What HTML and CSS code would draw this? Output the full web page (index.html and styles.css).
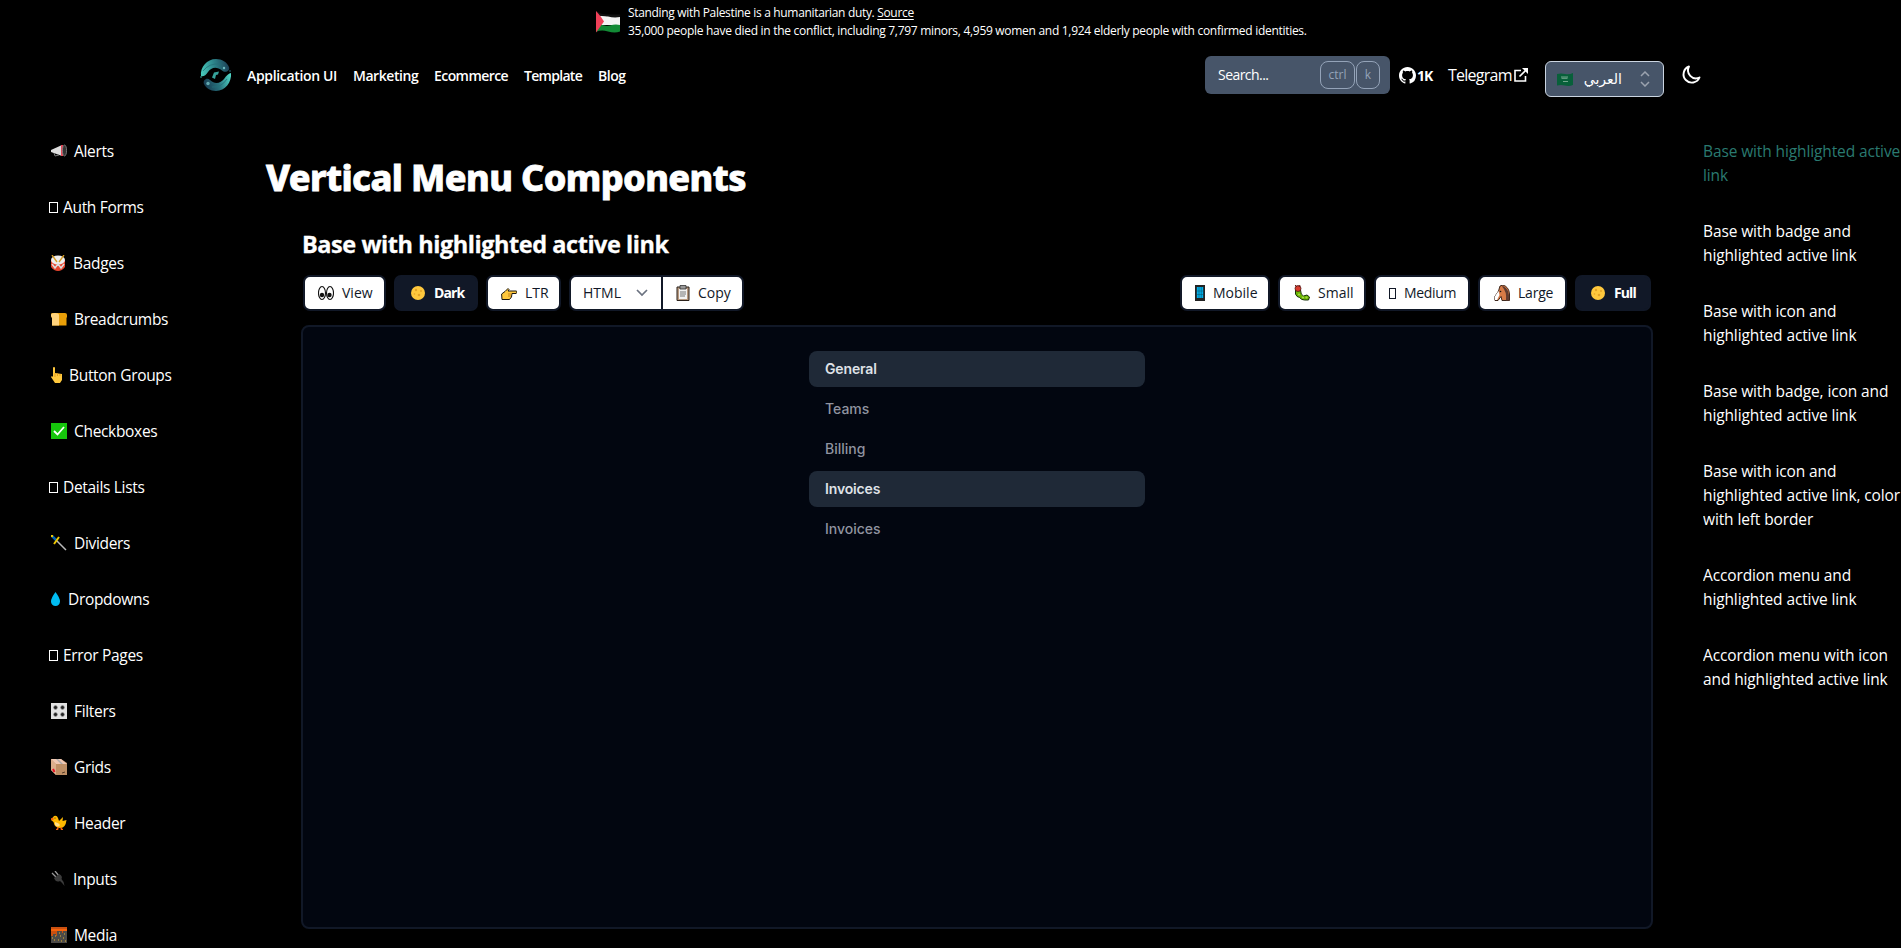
FILE: index.html
```
<!DOCTYPE html>
<html lang="en">
<head>
<meta charset="utf-8">
<title>Vertical Menu Components</title>
<link rel="stylesheet" href="styles.css">
</head>
<body>
<div class="banner">
  <svg class="banner-flag" viewBox="0 0 24 22"><path d="M0 2.500Q6 6 12 5T24 5.500V14H0z" fill="#f4f4f4"/><path d="M0 0Q5 3.500 11 3.500T24 3.500V6Q18 7 12 5.500T0 6z" fill="#111"/><path d="M3 12.500Q9 16 14 14.500T24 14V20.500Q19 22.500 12 20.500T0 21z" fill="#128a35"/><path d="M0 0Q4 4 8 10.500Q4 16 0 21.500z" fill="#ee4058"/></svg>
  <div class="banner-text">
    <p>Standing with Palestine is a humanitarian duty. <a class="source">Source</a></p>
    <p>35,000 people have died in the conflict, including 7,797 minors, 4,959 women and 1,924 elderly people with confirmed identities.</p>
  </div>
</div>

<header class="topbar">
  <svg class="logo" viewBox="0 0 32 32">
    <defs>
      <linearGradient id="swirlTop" x1="0" y1=".6" x2="1" y2=".5"><stop offset="0" stop-color="#47c8ba"/><stop offset=".5" stop-color="#2c8289"/><stop offset="1" stop-color="#1c4056"/></linearGradient>
      <linearGradient id="swirlLow" x1="0" y1=".5" x2="1" y2=".3"><stop offset="0" stop-color="#173c52"/><stop offset=".5" stop-color="#28727d"/><stop offset="1" stop-color="#4fd4c5"/></linearGradient>
    </defs>
    <path d="M1 17C0 8 7 0 16 0c6 0 11 3 13 8 1.500 4-4 6.500-7 3.500C17 7 11 8 8 13c-2 3.500-5 5-7 4z" fill="url(#swirlTop)"/>
    <path d="M31 14c1 9-6 18-15 18-6 0-10-3-12-7-1.500-4 3-7 6-4 5 5 11 3 14-1 2.500-3.500 5-6 7-6z" fill="url(#swirlLow)"/>
    <path d="M3 12Q9 4 20 5" fill="none" stroke="#247079" stroke-width=".8"/><path d="M12 28q9 1 15-8" fill="none" stroke="#237078" stroke-width=".8"/>
    <path d="M14 13.500l5-1-1 3-2 .500-1 4-3-1.500z" fill="#36a39b"/><circle cx="24" cy="9" r="1.200" fill="#6dbac0"/><circle cx="8" cy="24.500" r="1.700" fill="#63a8b0"/><circle cx="1" cy="18" r=".8" fill="#43b7ac"/><circle cx="30" cy="12" r=".8" fill="#2b7280"/>
  </svg>
  <nav class="nav"><a class="w90">Application UI</a><a class="w65">Marketing</a><a class="w74">Ecommerce</a><a class="w58">Template</a><a>Blog</a></nav>
  <div class="search"><span class="search-label">Search...</span><kbd class="ctrl">ctrl</kbd><kbd class="key">k</kbd></div>
  <a class="github"><svg width="17" height="17" viewBox="0 0 16 16"><path fill="#fff" d="M8 0C3.580 0 0 3.580 0 8c0 3.540 2.290 6.530 5.470 7.590.4.070.55-.17.55-.38 0-.19-.010-.82-.010-1.490-2.010.37-2.530-.49-2.690-.94-.09-.23-.48-.94-.82-1.130-.28-.15-.68-.52-.010-.53.63-.010 1.080.58 1.230.82.72 1.210 1.870.87 2.330.66.070-.52.28-.87.51-1.070-1.780-.2-3.640-.89-3.640-3.950 0-.87.31-1.590.82-2.150-.08-.2-.36-1.020.08-2.120 0 0 .67-.21 2.200.82.64-.18 1.320-.27 2-.27s1.360.09 2 .27c1.530-1.040 2.200-.82 2.200-.82.44 1.100.16 1.920.08 2.120.51.56.82 1.270.82 2.150 0 3.070-1.870 3.750-3.650 3.950.29.25.54.73.54 1.480 0 1.070-.010 1.930-.010 2.200 0 .21.15.46.55.38A8.010 8.010 0 0 0 16 8c0-4.420-3.580-8-8-8z"/></svg><span>1K</span></a>
  <a class="telegram"><span>Telegram</span><svg width="14" height="14" viewBox="0 0 14 14" fill="none" stroke="#fff" stroke-width="1.600"><path d="M7 2.500H1V13H11.500V8M5.500 8.500L12 2"/><path d="M8 0h6v6z" fill="#fff" stroke="none"/></svg></a>
  <div class="lang"><svg width="16" height="13" viewBox="0 0 16 13"><path d="M0 1q4-1 8 0t8-1v12q-4 1.500-8 .5T0 12.500z" fill="#08603a"/><path d="M4 4h7M4.500 5.300h6M6 8.500h5" stroke="#8eb9a2" stroke-width=".8"/></svg><span class="lang-name" dir="rtl">العربي</span><svg width="10" height="16" viewBox="0 0 10 16" fill="none" stroke="#9ca3af" stroke-width="1.500"><path d="M1 5l4-4 4 4M1 11l4 4 4-4"/></svg></div>
  <svg class="moon" width="20" height="20" viewBox="0 0 20 20" fill="none" stroke="#fff" stroke-width="1.900" stroke-linejoin="round"><path d="M8 1.500A8.300 8.300 0 1 0 18.500 12.500 8 8 0 0 1 8 1.500z"/></svg>
</header>

<div class="columns">
  <aside class="sidebar">
    <a class="i23"><svg viewBox="0 0 16 16"><path d="M0 7l11-5v11L0 9z" fill="#ddd"/><path d="M10 2h2v11h-2z" fill="#e54858"/><ellipse cx="13.500" cy="7.500" rx="2.100" ry="5.500" fill="#333" stroke="#888" stroke-width=".8"/><path d="M3 10l1 3 4-1" stroke="#777" fill="none"/></svg>Alerts</a>
    <a class="box"><i class="tofu"></i>Auth Forms</a>
    <a class="i22"><svg viewBox="0 0 16 16"><path d="M0 5h14v7q-3 4-7 4t-7-4z" fill="#e8452e"/><ellipse cx="7" cy="5" rx="7" ry="4.500" fill="#eee"/><path d="M1 9l3 4 3-4 3 4 3-4" stroke="#ddd" fill="none" stroke-width="1.500"/><path d="M1 0l5 7M13 0L8 7" stroke="#d59b22" stroke-width="1.300"/></svg>Badges</a>
    <a class="i24"><svg viewBox="0 0 16 16"><path d="M0 3q0-1 2-1h12q2 0 2 2v2l-.5 1v7.500H1V7L0 5z" fill="#e99f08"/><path d="M0 4q0-2 4-2t4 2v10.500H1V7L0 5z" fill="#ffd37c"/></svg>Breadcrumbs</a>
    <a class="i19"><svg viewBox="0 0 16 16"><path d="M2 1q0-1 1-1t1 1v5l7 1v6l-2 3H4L0 10l1-1 1 1z" fill="#ffc83d"/><path d="M4 6v4M6.500 6v3M9 7v2" stroke="#d68d16" stroke-width=".7"/></svg>Button Groups</a>
    <a class="i23"><svg viewBox="0 0 16 16"><path d="M0 0h16v16H0z" fill="#16c60c"/><path d="M3 8l3.500 3.500L13 4" stroke="#fff" stroke-width="1.800" fill="none"/></svg>Checkboxes</a>
    <a class="box"><i class="tofu"></i>Details Lists</a>
    <a class="i24"><svg viewBox="0 0 16 16"><path d="M5 5l10 10" stroke="#bbb" stroke-width="1.500"/><path d="M0 0l6 6" stroke="#0063b1" stroke-width="2.500"/><path d="M8 2L3 9" stroke="#f0c800" stroke-width="2"/><circle cx="1" cy="1" r="1.200" fill="#f0c800"/></svg>Dividers</a>
    <a class="i18"><svg viewBox="0 0 16 16"><path d="M4.500 1Q9 7 9 10.500a4.500 4.500 0 0 1-9 0Q0 7 4.500 1z" fill="#00bcf2"/></svg>Dropdowns</a>
    <a class="box"><i class="tofu"></i>Error Pages</a>
    <a class="i24"><svg viewBox="0 0 16 16"><path d="M0 0h16v16H0z" fill="#e2e2e2"/><g fill="#222" stroke="#999" stroke-width=".6"><circle cx="4.500" cy="4.500" r="1.900"/><circle cx="11.500" cy="4.500" r="1.900"/><circle cx="4.500" cy="11.500" r="1.900"/><circle cx="11.500" cy="11.500" r="1.900"/></g></svg>Filters</a>
    <a class="i23"><svg viewBox="0 0 16 16"><path d="M0 0h10l6 4v12H5L0 11z" fill="#be8f65"/><path d="M0 0l5 5v11L0 11z" fill="#dbae8c"/><path d="M0 0h10l6 5H5z" fill="#efc7b2"/><path d="M5 0h2l5 5h-2z" fill="#aaa"/><path d="M2 10l1.500 3" stroke="#e81224" stroke-width="2"/><path d="M11 14l3-1" stroke="#553b27"/></svg>Grids</a>
    <a class="i24"><svg viewBox="0 0 16 16"><path d="M3 1q3-1 4 2l1 3 4-4-.500 4 4-1q-1 8-6 8-6 0-7-6L0 5z" fill="#ffb900"/><path d="M4 7q4 1 5 3-2 3-5 0z" fill="#ffe08a"/><path d="M0 4l2-1v2zM7 12v2.500H5M10 12v2.500h2" fill="#f7630c" stroke="#f7630c"/><circle cx="4" cy="3" r=".6" fill="#222"/></svg>Header</a>
    <a class="i22"><svg viewBox="0 0 16 16"><path d="M1 2l4 4M4 0l4 5" stroke="#999" stroke-width="1.300"/><path d="M3 7l5-4q4 2 2.500 5 3 3 3 7-2-3-4.500-5-4 2-6-3z" fill="#3b3b3b"/></svg>Inputs</a>
    <a class="i24"><svg viewBox="0 0 16 16"><path d="M0 0h16v16H0z" fill="#ca5010"/><path d="M0 3h16" stroke="#f7630c" stroke-width="2"/><path d="M0 9h2V7h3v2h1V4h5v2h1V4h4v12H0z" fill="#4c4a48"/><path d="M1 11h1M4 9h1M3 13h1M8 6h1M9 9h1M7 13h1M13 7h1M12 11h1M14 14h1M10 14h1" stroke="#e5b62f" stroke-width="1.200"/></svg>Media</a>
  </aside>

  <main class="content">
    <h1>Vertical Menu Components</h1>
    <section>
      <h2>Base with highlighted active link</h2>
      <div class="toolbar">
        <button class="btn view"><svg viewBox="0 0 16 16"><g fill="#fff" stroke="#111" stroke-width="1.100"><ellipse cx="4" cy="8" rx="3.500" ry="6.500"/><ellipse cx="12" cy="8" rx="3.500" ry="6.500"/></g><circle cx="4" cy="10" r="2.200" fill="#111"/><circle cx="11.500" cy="10" r="2.200" fill="#111"/></svg><span>View</span></button>
        <button class="btn on dark"><svg viewBox="0 0 16 16"><circle cx="8" cy="8" r="7" fill="#ffc83d"/><g fill="#e5a326"><circle cx="6" cy="5" r="1.200"/><circle cx="11" cy="6" r="1"/><circle cx="9" cy="10" r="1.300"/><circle cx="4.500" cy="9" r=".8"/></g></svg><span>Dark</span></button>
        <button class="btn ltr"><svg viewBox="0 0 16 16"><path d="M.6 9L4 6.500l3-3 1 1-1 1.500h8q1 0 1 1t-1 1.500h-4L10.500 12l-2 2.500H1z" fill="#ffc83d" stroke="#1b1710"/><path d="M7 9h4M7 11h3" stroke="#b87414" stroke-width=".8"/></svg><span>LTR</span></button>
        <div class="pair">
          <div class="select"><span>HTML</span><svg viewBox="0 0 12 8" fill="none" stroke="#6b7280" stroke-width="1.700"><path d="M1 1l5 5 5-5"/></svg></div>
          <div class="copy"><svg viewBox="0 0 16 16"><path d="M2 2h12v13.500H2z" fill="#b99a80" stroke="#2b211b"/><path d="M4 4h8v10H4z" fill="#f2f2f2"/><path d="M5 .5h6V4H5z" fill="#999" stroke="#333" stroke-width=".8"/><path d="M5 7h6M5 9h6M5 11h5" stroke="#777"/></svg><span>Copy</span></div>
        </div>
        <div class="sizes">
          <button class="btn mobile"><svg viewBox="0 0 10 16"><path d="M0 0h10v16H0z" fill="#222"/><path d="M1.800 2h6.400v11H1.800z" fill="#00aee8"/><path d="M4 2v11M6.300 2v11M2 6h6M2 9.500h6" stroke="#08536b" stroke-width=".5"/></svg><span>Mobile</span></button>
          <button class="btn small"><svg viewBox="0 0 16 16"><path d="M1.500 5v4q1 3 4 3.500 2 2.500 5 2.500h4l1-3-2.500-2-3.500 1q-3-1-3-6z" fill="#6bb700" stroke="#17310a"/><circle cx="4" cy="3.500" r="3" fill="#d83b2d" stroke="#3b1010" stroke-width=".7"/><path d="M1 0l2 2M6 0L5 2" stroke="#6d1712"/><g fill="#a4d84b"><circle cx="5" cy="9.500" r="1.100"/><circle cx="9" cy="12.500" r="1.100"/><circle cx="12.500" cy="12.500" r="1.100"/></g></svg><span>Small</span></button>
          <button class="btn medium"><i class="tofu"></i><span>Medium</span></button>
          <button class="btn large"><svg viewBox="0 0 16 16"><path d="M6 1l3-1q6 2 6.500 9v6.500H8l-1-4-3 4H1L.5 12l4-6z" fill="#d77b47" stroke="#2c1910" stroke-width=".9"/><path d="M4.500 6l1 4-2.500 5H1l-.5-3z" fill="#fff"/><path d="M9 1q7 3 6 14.500h-3q1-9-4-14z" fill="#603c31"/><circle cx="6.500" cy="6.500" r=".8" fill="#111"/></svg><span>Large</span></button>
          <button class="btn on full"><svg viewBox="0 0 16 16"><circle cx="8" cy="8" r="7" fill="#ffc83d"/><g fill="#e5a326"><circle cx="6" cy="5" r="1.200"/><circle cx="11" cy="6" r="1"/><circle cx="9" cy="10" r="1.300"/><circle cx="4.500" cy="9" r=".8"/></g></svg><span>Full</span></button>
        </div>
      </div>
      <div class="preview">
        <ul class="menu"><li class="active">General</li><li>Teams</li><li>Billing</li><li class="active">Invoices</li><li>Invoices</li></ul>
      </div>
    </section>
  </main>

  <aside class="toc">
    <a class="current">Base with highlighted active<br>link</a>
    <a>Base with badge and<br>highlighted active link</a>
    <a>Base with icon and<br>highlighted active link</a>
    <a>Base with badge, icon and<br>highlighted active link</a>
    <a>Base with icon and<br>highlighted active link, color<br>with left border</a>
    <a>Accordion menu and<br>highlighted active link</a>
    <a>Accordion menu with icon<br>and highlighted active link</a>
  </aside>
</div>
</body>
</html>
```
FILE: styles.css
```
* { box-sizing: border-box; margin: 0; padding: 0; }
body { background: #000; color: #fff; font-family: "Open Sans", sans-serif; height: 948px; overflow: hidden; }
svg { display: block; flex: none; }

.banner { display: flex; height: 45px; padding: 4px 0 0 596px; }
.banner-flag { width: 24px; height: 22px; margin: 7px 8px 0 0; }
.banner-text { font-size: 12px; line-height: 18px; letter-spacing: -.29px; white-space: nowrap; }
.banner-text p:first-child { letter-spacing: -.33px; }
.source { text-decoration: underline; text-underline-offset: 2px; }

.topbar { display: flex; height: 94px; padding-left: 200px; }
.logo { width: 32px; height: 32px; margin: 14px 15px 0 0; }
.nav { display: flex; flex: none; gap: 16px; width: 958px; padding-top: 21px; font-size: 14px; font-weight: 600; line-height: 20px; letter-spacing: -.45px; white-space: nowrap; }
.w90 { width: 90px; letter-spacing: -.34px; }
.w65 { width: 65px; }
.w74 { width: 74px; letter-spacing: -.57px; }
.w58 { width: 58px; letter-spacing: -.7px; }
.search { display: flex; flex: none; width: 185px; height: 38px; margin-top: 11px; padding: 5px 9px 5px 13px; border-radius: 6px; background: #475569; font-size: 14px; letter-spacing: -.55px; }
.search-label { width: 102px; line-height: 28px; }
kbd { height: 28px; border: 1px solid #94a3b8; border-radius: 8px; color: #94a3b8; font: 12px/26px "Open Sans", sans-serif; text-align: center; letter-spacing: 0; }
.ctrl { width: 35px; margin-right: 1px; }
.key { width: 24px; }
.github { display: flex; flex: none; gap: 1px; margin: 22px 0 0 9px; width: 49px; font-size: 14px; font-weight: 700; line-height: 18px; letter-spacing: -1px; }
.telegram { display: flex; flex: none; width: 97px; padding-top: 18px; font-size: 16px; line-height: 24px; letter-spacing: -.75px; }
.telegram span { width: 66px; }
.telegram svg { margin-top: 5px; }
.lang { display: flex; flex: none; align-items: center; width: 119px; height: 36px; margin-top: 16px; padding: 0 13px 0 11px; border: 1px solid #cbd5e1; border-radius: 6px; background: #475569; }
.lang-name { width: 39px; margin: 0 18px 0 10px; font: 14px/20px "DejaVu Sans", sans-serif; text-align: right; white-space: nowrap; }
.moon { margin: 20px 0 0 17px; }

.columns { display: flex; }
.sidebar { display: flex; flex: none; flex-direction: column; gap: 32px; width: 266px; padding-left: 51px; font-size: 15.5px; line-height: 24px; letter-spacing: -.32px; }
.sidebar a { display: flex; align-items: center; white-space: nowrap; }
.sidebar svg { width: 16px; height: 16px; }
.i18 svg { margin-right: 1px; }
.i19 svg { margin-right: 2px; }
.i22 svg { margin-right: 6px; }
.i23 svg { margin-right: 7px; }
.i24 svg { margin-right: 7px; }
.tofu { flex: none; width: 9px; height: 11px; border: 1px solid currentColor; }
.box .tofu { margin: 0 5px 0 -2px; }

.content { flex: none; width: 1387px; padding-top: 19px; }
h1 { font: 800 36px/40px "Noto Sans", sans-serif; letter-spacing: -.59px; -webkit-text-stroke: .8px #fff; }
section { width: 1352px; margin: 30px 0 0 35px; }
h2 { padding-left: 1px; font-size: 23.5px; font-weight: 700; line-height: 32px; letter-spacing: -.45px; -webkit-text-stroke: .3px #fff; }
.toolbar { display: flex; height: 36px; margin: 15px 0 14px; padding-left: 2px; font-size: 14px; }
.btn { display: flex; align-items: center; height: 36px; border: 2px solid #111827; border-radius: 7px; background: #fff; color: #111827; font: 14px/20px "Open Sans", sans-serif; white-space: nowrap; }
.btn svg, .copy svg { width: 16px; height: 16px; margin-right: 8px; }
.on { background: #111827; color: #fff; font-weight: 700; letter-spacing: -.9px; }
.view { width: 83px; padding-left: 13px; margin-right: 8px; }
.dark { width: 84px; padding-left: 14px; margin-right: 8px; }
.ltr { width: 75px; padding-left: 13px; margin-right: 8px; }
.pair { display: flex; width: 175px; height: 36px; border: 2px solid #111827; border-radius: 7px; background: #fff; color: #111827; overflow: hidden; line-height: 32px; }
.select { display: flex; align-items: center; width: 92px; padding-left: 12px; border-right: 2px solid #111827; }
.select svg { width: 12px; height: 8px; margin-left: 15px; }
.copy { display: flex; align-items: center; padding-left: 12px; }
.copy svg { margin-right: 7px; }
.sizes { display: flex; gap: 8px; margin-left: auto; padding-right: 2px; }
.mobile { width: 90px; padding-left: 13px; }
.mobile svg { width: 10px; }
.small { width: 88px; padding-left: 14px; }
.medium { width: 96px; padding-left: 13px; letter-spacing: -.35px; }
.medium .tofu { width: 7px; margin-right: 8px; }
.large { width: 89px; padding-left: 14px; letter-spacing: -.2px; }
.full { width: 76px; padding-left: 13px; }
.preview { height: 604px; padding-top: 24px; border: 2px solid #111827; border-radius: 8px; background: #020610; }
.menu { width: 336px; margin: 0 auto; list-style: none; font: 500 14px/20px Inter, sans-serif; color: #9094a0; }
.menu li { height: 36px; margin-bottom: 4px; padding: 8px 16px; border-radius: 8px; }
.menu .active { background: #1f2937; color: #dfe2e7; font-weight: 600; letter-spacing: -.15px; }

.toc { display: flex; flex: none; flex-direction: column; gap: 32px; width: 198px; margin-left: 50px; font-size: 15.5px; line-height: 24px; letter-spacing: -.12px; white-space: nowrap; overflow: hidden; }
.current { color: #2a7a70; }
```
